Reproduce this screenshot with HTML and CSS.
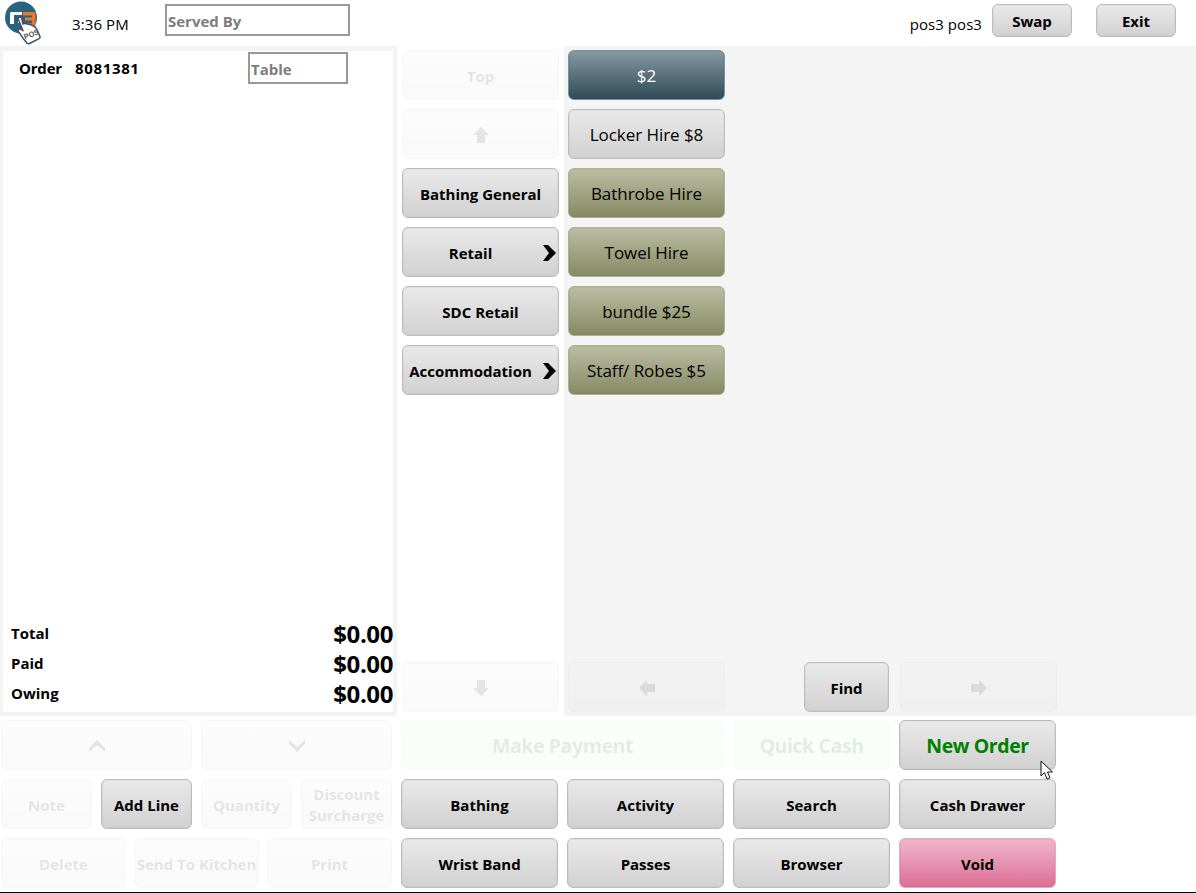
FILE: index.html
```html
<!DOCTYPE html>
<html lang="en">
<head>
<meta charset="utf-8">
<title>POS</title>
<link rel="stylesheet" href="styles.css">
</head>
<body>
<div class="app">
  <header class="top">
    <svg class="logo" width="44" height="46" viewBox="0 0 44 46" aria-hidden="true">
      <circle cx="20" cy="17.500" r="16" fill="#2b6282"/>
      <path d="M9 24V13.500c0-1 .6-1.500 1.500-1.500H21v3H13v9z" fill="#fff"/>
      <path d="M17 18h3v5h-3z" fill="#fff"/>
      <path d="M22 12h11c1 0 1.500.6 1.500 1.500V25c0 1-.6 1.500-1.500 1.500h-7v-3h5v-3h-7v-3h7v-2h-9z" fill="#e9772c"/>
      <path d="M17 18.500c0-2 3.400-2.300 3.800 0l1.200 5.500 2-.6 2.200.6 2.300.4 2.500.8c2.500.8 4 2.300 4.800 4.300l3.200 7c.3 1 0 1.700-.9 2.200L28.500 43.500c-1 .5-1.800.3-2.400-.3l-4.100-5-4.500-6.600c-1.300-2 .8-3.500 2.700-2.200l1.800 1.300z" fill="#fff" stroke="#44505a" stroke-width="1.500" stroke-linejoin="round"/>
      <text x="24" y="39.500" class="logo-text" transform="rotate(-22 24 39.500)">POS</text>
    </svg>
    <span class="time">3:36 PM</span>
    <div class="field served">Served By</div>
    <span class="user">pos3 pos3</span>
    <button class="btn small swap">Swap</button>
    <button class="btn small exit">Exit</button>
  </header>

  <main class="main">
    <section class="order-wrap">
      <div class="order">
        <div class="order-head">
          <span class="order-label">Order</span>
          <span class="order-num">8081381</span>
          <div class="field table">Table</div>
        </div>
        <div class="totals">
          <div class="total-row"><span>Total</span><b>$0.00</b></div>
          <div class="total-row"><span>Paid</span><b>$0.00</b></div>
          <div class="total-row"><span>Owing</span><b>$0.00</b></div>
        </div>
      </div>
    </section>

    <nav class="cats">
      <button class="btn off">Top</button>
      <button class="btn off"><svg class="arrow" width="16" height="16" viewBox="0 0 16 16"><path d="M8 0l8 8h-4v8H4V8H0z"/></svg></button>
      <button class="btn">Bathing General</button>
      <button class="btn more"><span class="more-label">Retail</span><svg class="chev" width="13" height="16" viewBox="0 0 13 16"><path d="M0 0h5l8 8-8 8H0l6-8z"/></svg></button>
      <button class="btn">SDC Retail</button>
      <button class="btn more"><span class="more-label">Accommodation</span><svg class="chev" width="13" height="16" viewBox="0 0 13 16"><path d="M0 0h5l8 8-8 8H0l6-8z"/></svg></button>
      <button class="btn off push"><svg class="arrow" width="16" height="16" viewBox="0 0 16 16"><path d="M8 16L0 8h4V0h8v8h4z"/></svg></button>
    </nav>

    <section class="items">
      <button class="btn item slate">$2</button>
      <button class="btn item">Locker Hire $8</button>
      <button class="btn item olive">Bathrobe Hire</button>
      <button class="btn item olive">Towel Hire</button>
      <button class="btn item olive">bundle $25</button>
      <button class="btn item olive">Staff/ Robes $5</button>
      <div class="pager">
        <button class="btn off pg"><svg class="arrow" width="16" height="16" viewBox="0 0 16 16"><path d="M0 8l8-8v4h8v8H8v4z"/></svg></button>
        <button class="btn find">Find</button>
        <button class="btn off pg"><svg class="arrow" width="16" height="16" viewBox="0 0 16 16"><path d="M16 8l-8 8v-4H0V4h8V0z"/></svg></button>
      </div>
    </section>
  </main>

  <footer class="bottom">
    <div class="left-actions">
      <div class="row two">
        <button class="btn off"><svg class="arrow" width="16" height="12" viewBox="0 0 16 12"><path d="M8 0l8 8v4L8 5l-8 7V8z"/></svg></button>
        <button class="btn off"><svg class="arrow" width="16" height="12" viewBox="0 0 16 12"><path d="M0 0l8 7 8-7v4l-8 8-8-8z"/></svg></button>
      </div>
      <div class="row four">
        <button class="btn off">Note</button>
        <button class="btn">Add Line</button>
        <button class="btn off">Quantity</button>
        <button class="btn off tight">Discount Surcharge</button>
      </div>
      <div class="row three">
        <button class="btn off">Delete</button>
        <button class="btn off nowrap">Send To Kitchen</button>
        <button class="btn off">Print</button>
      </div>
    </div>
    <div class="right-actions">
      <button class="btn off big pay">Make Payment</button>
      <button class="btn off big pay">Quick Cash</button>
      <button class="btn big new">New Order</button>
      <button class="btn">Bathing</button>
      <button class="btn">Activity</button>
      <button class="btn">Search</button>
      <button class="btn">Cash Drawer</button>
      <button class="btn">Wrist Band</button>
      <button class="btn">Passes</button>
      <button class="btn">Browser</button>
      <button class="btn void">Void</button>
    </div>
  </footer>
</div>
<svg class="cursor" width="14" height="21" viewBox="0 0 14 21" aria-hidden="true"><path d="M1 1v15l3.500-3.300L7 19l3-1.300-2.500-5.700H12.500z" fill="#fff" stroke="#111" stroke-width="1"/></svg>
</body>
</html>
```

FILE: styles.css
```css
* { box-sizing: border-box; }
html, body { margin: 0; height: 893px; overflow: hidden; background: #fff; }
body { font-family: "Open Sans", "Noto Sans", "Liberation Sans", sans-serif; color: #000; }
.app { display: flex; flex-direction: column; height: 893px; border-bottom: 1px solid #000; }

.btn {
  display: block; padding: 1px 1px 0; margin: 0; height: 50px;
  font: 700 15px/20px "Open Sans", "Noto Sans", sans-serif; letter-spacing: 0; color: #000;
  background: linear-gradient(#e9e9e9, #d1d1d1);
  border: 1px solid #bcbcbc; border-radius: 6px;
  box-shadow: inset 0 0 0 1px rgba(0, 0, 0, .03);
}
.btn.off { opacity: .1; }

.top { height: 46px; display: flex; align-items: flex-start; position: relative; background: #fff; }
.logo { position: absolute; left: 1px; top: 0; }
.logo-text { font: 700 7.500px "Liberation Sans", sans-serif; fill: #555; }
.time { margin: 14px 0 0 72px; width: 93px; font-size: 15px; line-height: 20px; letter-spacing: .1px; }
.field { border: 2px solid #999; color: #7d7d7d; font-weight: 700; font-size: 15px; letter-spacing: 0; line-height: 20px; padding: 5px 1px; height: 32px; }
.served { width: 185px; margin-top: 4px; }
.user { margin: 14px 0 0 auto; font-size: 15px; line-height: 20px; letter-spacing: .05px; }
.btn.small { width: 80px; height: 33px; margin-top: 4px; }
.btn.swap { margin-left: 10px; }
.btn.exit { margin-left: 24px; margin-right: 20px; }

.main { height: 670px; display: flex; background: #f4f4f4; }
.order-wrap { width: 397px; padding: 5px 4px 4px 3px; }
.order { height: 661px; background: #fff; display: flex; flex-direction: column; }
.order-head { display: flex; align-items: flex-start; }
.order-label { margin: 7px 0 0 16px; width: 56px; font-weight: 700; font-size: 15px; line-height: 20px; letter-spacing: -.2px; }
.order-num { margin-top: 7px; width: 173px; font-weight: 700; font-size: 15px; line-height: 20px; letter-spacing: .65px; }
.table { width: 100px; margin-top: 1px; }
.totals { margin-top: auto; padding-bottom: 4px; }
.total-row { height: 30px; display: flex; justify-content: space-between; align-items: center; padding-left: 8px; font-weight: 700; font-size: 15px; }
.total-row b { font-weight: 700; font-size: 24px; letter-spacing: -.4px; }

.cats { width: 167px; background: #fff; padding: 4px 5px 4px; display: flex; flex-direction: column; gap: 9px; }
.cats .btn { flex: none; }
.btn.off.push { margin-top: auto; }
.more { display: flex; align-items: center; }
.more-label { flex: 1; padding-right: 6px; text-align: center; }
.more .chev { margin-right: 1px; }
.arrow { display: block; margin: 0 auto; fill: #000; }

.items { flex: 1; padding: 4px; display: flex; flex-direction: column; align-items: flex-start; gap: 9px; }
.btn.item { width: 157px; flex: none; font-weight: 400; font-size: 17px; letter-spacing: -.05px; }
.btn.slate { background: linear-gradient(#8699a2, #2e4b57); border-color: #7d8f98; color: #fff; }
.btn.olive { background: linear-gradient(#babda2, #868a63); border-color: #aeb196; }
.pager { margin-top: auto; display: flex; align-items: flex-start; }
.btn.pg { width: 157px; }
.btn.find { width: 85px; margin: 0 11px 0 79px; }

.bottom { flex: 1; display: flex; background: #fff; padding: 4px 0 0 1px; }
.left-actions { width: 391px; display: flex; flex-direction: column; gap: 9px; }
.row { display: grid; height: 50px; }
.two { grid-template-columns: 191px 191px; column-gap: 9px; }
.four { grid-template-columns: repeat(4, 91px); column-gap: 9px; }
.three { grid-template-columns: repeat(3, 125px); column-gap: 8px; }
.btn.tight { line-height: 21px; }
.btn.nowrap { white-space: nowrap; }
.right-actions { margin-left: 9px; display: grid; grid-template-columns: repeat(4, 157px); grid-auto-rows: 50px; gap: 9px; }
.btn.big { font-size: 19.500px; line-height: 24px; letter-spacing: -.4px; }
.btn.pay { background: linear-gradient(#d9ffd9, #c8f7c8); color: #004000; border-color: #c0f0c0; }
.right-actions .pay:first-child { grid-column: span 2; }
.btn.new { color: #008000; }
.btn.void { background: linear-gradient(#efb6cb, #dc6f96); border-color: #e8a9c0; }

.cursor { position: absolute; left: 1040px; top: 760px; }
```
